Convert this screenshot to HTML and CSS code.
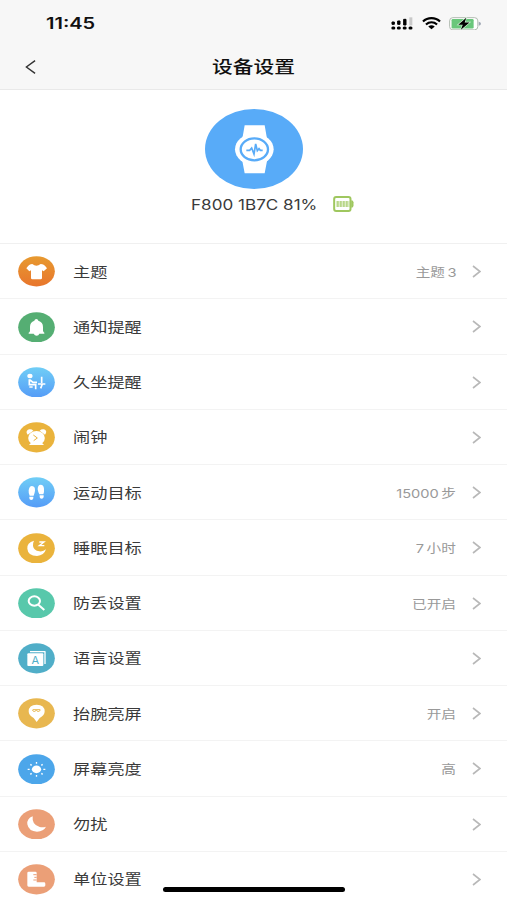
FILE: index.html
```html
<!DOCTYPE html>
<html lang="zh-CN">

<head>
    <meta charset="UTF-8">
    <meta name="viewport" content="width=device-width, initial-scale=1.0">
    <title>设备设置</title>
    <link rel="stylesheet" href="styles.css">
</head>

<body>
    <header class="header">
        <div class="status-bar">
            <span class="time">11:45</span>
            <div class="status-icons">
                <svg class="signal" viewBox="0 0 66 39">
                    <path fill="#c9c9c9" d="M55 1h9v24h-9z" />
                    <path d="M3 15h7v7H3zM20 12h7v10h-7zM38 7h7v17h-7z" stroke="#000" stroke-width="3" stroke-linejoin="round" />
                    <path d="M5.500 33h3M22 33h3M39.500 33h3M57 33h3" stroke="#000" stroke-width="9" stroke-linecap="round" />
                </svg>
                <svg class="wifi" viewBox="0 0 58 38">
                    <g fill="none" stroke="#000" stroke-width="6.500">
                        <path d="M3 14C17 0 41 0 55 14" />
                        <path d="M12 23C22 14 36 14 46 23" />
                    </g>
                    <path d="M19 29Q29 21 39 29L29 37z" />
                </svg>
                <svg class="charge" viewBox="0 0 100 42">
                    <rect x="2" y="2" width="88" height="38" rx="10" fill="#fff" stroke="#aeb8ad" stroke-width="3" />
                    <rect x="8" y="6" width="69" height="30" rx="4" fill="#69c77b" />
                    <path fill="#a0a8b5" d="M93 15q7 1 7 6t-7 6z" />
                    <path d="M54 2L29 24h14L37 40l27-23H49z" stroke="#d5f3d8" stroke-width="4" paint-order="stroke" />
                </svg>
            </div>
        </div>
        <div class="nav-bar">
            <svg class="back" viewBox="0 0 12 16">
                <path d="M11 1L1.500 8L11 15" />
            </svg>
            <h1 class="title">设备设置</h1>
        </div>
    </header>

    <section class="device">
        <svg class="watch" viewBox="0 0 294 240">
            <ellipse cx="147" cy="120" rx="147" ry="120" fill="#58abf8" />
            <g fill="#fff">
                <path d="M119 49h60l7 40h-74zM111 151h76l-8 42h-60z" />
                <ellipse cx="148" cy="121" rx="58" ry="47" />
            </g>
            <ellipse cx="148" cy="121" rx="41" ry="33" fill="none" stroke="#58abf8" stroke-width="7" />
            <path d="M124 124h10l6-7 7 18 5-30 5 20 5-6 4 5h7" fill="none" stroke="#58abf8" stroke-width="5" />
        </svg>
        <div class="device-info">
            <span class="device-name"><span class="wide">F800 1B7C 81%</span></span>
            <svg class="battery" viewBox="0 0 62 48">
                <rect x="3" y="3" width="49" height="42" rx="6" fill="none" stroke="#9fc75f" stroke-width="6" />
                <path fill="#9fc75f" d="M54 13q7 0 7 6v10q0 6-7 6z" />
                <path d="M10 24h39" stroke="#b8d789" stroke-width="18" stroke-dasharray="7 2" />
            </svg>
        </div>
    </section>

    <ul class="menu">
        <li class="row">
            <svg class="icon" viewBox="0 0 111 92">
                <defs>
                    <linearGradient id="orange" x2="0" y2="1">
                        <stop stop-color="#e79a30" />
                        <stop offset="1" stop-color="#e8752c" />
                    </linearGradient>
                    <linearGradient id="blue" x2="0" y2="1">
                        <stop stop-color="#70cef6" />
                        <stop offset="1" stop-color="#559cf7" />
                    </linearGradient>
                </defs>
                <ellipse cx="55.500" cy="46" rx="55" ry="45.500" fill="url(#orange)" />
                <path class="shape" d="M43 24q12 10 25 0 11 0 19 13l-10 9-5-3v23q0 4-4 4H43q-4 0-4-4V43l-5 3-9-9q8-13 18-13z" />
            </svg>
            <span class="label">主题</span>
            <span class="value">主题 3</span>
            <svg class="arrow" viewBox="0 0 9 13"><path d="M1 1l7 5.500-7 5.500" /></svg>
        </li>
        <li class="row">
            <svg class="icon" viewBox="0 0 111 92">
                <ellipse cx="55.500" cy="46" rx="55" ry="45.500" fill="#55ae73" />
                <path class="shape" d="M55 21q5 0 6 5 14 4 14 19v11q1 5 4 6v3H32v-3q4-1 4-6V45q0-15 13-19 1-5 6-5zM47 65h17q-2 6-8 6t-9-6z" />
            </svg>
            <span class="label">通知提醒</span>
            <svg class="arrow" viewBox="0 0 9 13"><path d="M1 1l7 5.500-7 5.500" /></svg>
        </li>
        <li class="row">
            <svg class="icon" viewBox="0 0 111 92">
                <ellipse cx="55.500" cy="46" rx="55" ry="45.500" fill="url(#blue)" />
                <ellipse class="shape" cx="36" cy="27" rx="8" ry="6.500" />
                <path class="line desk" d="M34 37v16h19v14M36 39l9 7h12M34 60h10M60 51h22M73 51l-5 13M71 48V29" />
            </svg>
            <span class="label">久坐提醒</span>
            <svg class="arrow" viewBox="0 0 9 13"><path d="M1 1l7 5.500-7 5.500" /></svg>
        </li>
        <li class="row">
            <svg class="icon" viewBox="0 0 111 92">
                <ellipse cx="55.500" cy="46" rx="55" ry="45.500" fill="#eab33c" />
                <path class="shape" d="M26 33q-2-8 8-11 7-1 12 4L29 38zM84 33q3-8-7-11-7-1-12 4l16 12z" />
                <ellipse class="shape" cx="55.500" cy="48" rx="25" ry="21" />
                <path class="shape" d="M33 69l9-10h27l9 10z" />
                <path d="M46 39l12 9-11 8" fill="none" stroke="#eab33c" stroke-width="3" />
            </svg>
            <span class="label">闹钟</span>
            <svg class="arrow" viewBox="0 0 9 13"><path d="M1 1l7 5.500-7 5.500" /></svg>
        </li>
        <li class="row">
            <svg class="icon" viewBox="0 0 111 92">
                <ellipse cx="55.500" cy="46" rx="55" ry="45.500" fill="url(#blue)" />
                <path class="shape" d="M42 27q10 1 9 14-1 8-4 15H35q-4-8-3-16 2-13 10-13zM34 59h12v5q-1 5-6 5-6 0-6-5zM68 23q9 0 10 12 1 8-2 17H64q-4-8-5-15 0-14 9-14zM65 55h12v5q-1 5-6 5-6 0-6-5z" />
            </svg>
            <span class="label">运动目标</span>
            <span class="value">15000 步</span>
            <svg class="arrow" viewBox="0 0 9 13"><path d="M1 1l7 5.500-7 5.500" /></svg>
        </li>
        <li class="row">
            <svg class="icon" viewBox="0 0 111 92">
                <ellipse cx="55.500" cy="46" rx="55" ry="45.500" fill="#eab33c" />
                <path class="shape" d="M48 23Q26 29 28 47q2 22 29 22 21-1 27-20-9 8-20 6-17-3-19-16-1-9 3-16z" />
                <path class="line thin" d="M64 27h14L64 38h15" />
            </svg>
            <span class="label">睡眠目标</span>
            <span class="value">7 小时</span>
            <svg class="arrow" viewBox="0 0 9 13"><path d="M1 1l7 5.500-7 5.500" /></svg>
        </li>
        <li class="row">
            <svg class="icon" viewBox="0 0 111 92">
                <ellipse cx="55.500" cy="46" rx="55" ry="45.500" fill="#58c8ab" />
                <ellipse class="line" cx="49" cy="39" rx="17" ry="14" />
                <path class="line" d="M61 50l18 16" />
            </svg>
            <span class="label">防丢设置</span>
            <span class="value">已开启</span>
            <svg class="arrow" viewBox="0 0 9 13"><path d="M1 1l7 5.500-7 5.500" /></svg>
        </li>
        <li class="row">
            <svg class="icon" viewBox="0 0 111 92">
                <ellipse cx="55.500" cy="46" rx="55" ry="45.500" fill="#50aec8" />
                <path d="M36 26h45v37" fill="none" stroke="#fff" stroke-width="4" stroke-linejoin="round" />
                <rect class="shape" x="28" y="31" width="48" height="38" rx="3" />
                <text class="letter" x="52" y="62" text-anchor="middle">A</text>
            </svg>
            <span class="label">语言设置</span>
            <svg class="arrow" viewBox="0 0 9 13"><path d="M1 1l7 5.500-7 5.500" /></svg>
        </li>
        <li class="row">
            <svg class="icon" viewBox="0 0 111 92">
                <ellipse cx="55.500" cy="46" rx="55" ry="45.500" fill="#e8b750" />
                <path class="shape" d="M56 20q24 1 24 20 0 12-15 20l-9 12-9-12Q32 52 32 40q0-19 24-20z" />
                <path d="M43 36l6 6 6-6 6 6 6-6M44 35h23" fill="none" stroke="#e8b750" stroke-width="3" />
            </svg>
            <span class="label">抬腕亮屏</span>
            <span class="value">开启</span>
            <svg class="arrow" viewBox="0 0 9 13"><path d="M1 1l7 5.500-7 5.500" /></svg>
        </li>
        <li class="row">
            <svg class="icon" viewBox="0 0 111 92">
                <ellipse cx="55.500" cy="46" rx="55" ry="45.500" fill="#4ca6ea" />
                <ellipse class="shape" cx="55.500" cy="46" rx="14" ry="11.500" />
                <path class="line thin" d="M55.500 24v5M55.500 63v5M29 46h6M76 46h6M37 31l4 3M70 58l4 3M74 31l-4 3M41 58l-4 3" />
            </svg>
            <span class="label">屏幕亮度</span>
            <span class="value">高</span>
            <svg class="arrow" viewBox="0 0 9 13"><path d="M1 1l7 5.500-7 5.500" /></svg>
        </li>
        <li class="row">
            <svg class="icon" viewBox="0 0 111 92">
                <ellipse cx="55.500" cy="46" rx="55" ry="45.500" fill="#eb9f77" />
                <path class="shape" d="M44 22Q26 29 28 46q4 21 29 22 20-1 27-15-9 3-19 1-24-6-21-32z" />
            </svg>
            <span class="label">勿扰</span>
            <svg class="arrow" viewBox="0 0 9 13"><path d="M1 1l7 5.500-7 5.500" /></svg>
        </li>
        <li class="row">
            <svg class="icon" viewBox="0 0 111 92">
                <ellipse cx="55.500" cy="46" rx="55" ry="45.500" fill="#eb9f77" />
                <path class="shape" d="M32 23h20q4 0 4 4v28h22q4 0 4 4v5q0 4-4 4H32q-4 0-4-4V27q0-4 4-4z" />
                <path d="M46 32h10M49 40h7M46 48h10" stroke="#eb9f77" stroke-width="3" />
            </svg>
            <span class="label">单位设置</span>
            <svg class="arrow" viewBox="0 0 9 13"><path d="M1 1l7 5.500-7 5.500" /></svg>
        </li>
    </ul>

    <div class="home-indicator"></div>
</body>

</html>
```
FILE: styles.css
```css
* {
    box-sizing: border-box;
}

body {
    margin: 0;
    height: 900px;
    overflow: hidden;
    position: relative;
    background: #fff;
    color: #3a3a3a;
    font-family: Inter, "Noto Sans CJK SC", sans-serif;
}

svg {
    display: block;
    flex-shrink: 0;
}

.header {
    height: 90px;
    background: #f7f7f7;
    border-bottom: 1px solid #e9e9e9;
}

.status-bar {
    height: 46px;
    padding: 1px 26px 0 46px;
    display: flex;
    align-items: center;
    justify-content: space-between;
}

.time {
    font-size: 15.5px;
    font-weight: 600;
    color: #111;
    transform: scaleX(1.29);
    transform-origin: left;
}

.status-icons {
    display: flex;
    align-items: center;
    gap: 8.5px;
}

.signal {
    width: 22px;
    height: 13px;
}

.wifi {
    width: 19px;
    height: 12.5px;
}

.charge {
    width: 32px;
    height: 13.5px;
}

.nav-bar {
    height: 42px;
    padding: 0 25px;
    display: grid;
    grid-template-columns: 12px 1fr 12px;
    align-items: center;
}

.back {
    width: 11px;
    height: 16px;
}

.back path {
    fill: none;
    stroke: #333;
    stroke-width: 1.5;
}

.title {
    margin: 0;
    font-size: 17px;
    font-weight: 500;
    line-height: 24px;
    text-align: center;
    color: #111;
    transform: scaleX(1.22);
}

/* Watch picture with name and battery */
.device {
    height: 154px;
    padding-top: 19px;
    border-bottom: 1px solid #f0f0f0;
}

.watch {
    width: 98px;
    height: 80px;
    margin: 0 auto;
}

.device-info {
    display: flex;
    align-items: center;
    height: 30px;
    padding-left: 191px;
}

.device-name {
    width: 142px;
    font-size: 14px;
    white-space: nowrap;
}

.wide {
    display: inline-block;
    transform: scaleX(1.22);
    transform-origin: left;
}

.battery {
    width: 21px;
    height: 16px;
}

/* Settings list */
.menu {
    margin: 0;
    padding: 0;
    list-style: none;
}

.row {
    height: 55.25px;
    padding: 1px 26px 0 17.5px;
    display: flex;
    align-items: center;
    border-bottom: 1px solid #f3f3f3;
}

.icon {
    width: 37px;
    height: 30.7px;
    margin-right: 18.5px;
}

.shape {
    fill: #fff;
}

.line {
    fill: none;
    stroke: #fff;
    stroke-width: 6;
}

.thin {
    stroke-width: 4;
}

.desk {
    stroke-width: 5;
}

.letter {
    fill: #50aec8;
    font-size: 33px;
    font-weight: 400;
}

.label {
    padding-bottom: 2px;
    font-size: 14.1px;
    transform: scaleX(1.22);
    transform-origin: left;
}

.value {
    margin-left: auto;
    font-size: 12px;
    word-spacing: -1.3px;
    color: #999;
    transform: scaleX(1.22);
    transform-origin: right;
}

.arrow {
    width: 9px;
    height: 13px;
    margin-left: auto;
}

.value + .arrow {
    margin-left: 16px;
}

.arrow path {
    fill: none;
    stroke: #b8b8b8;
    stroke-width: 1.6;
}

.home-indicator {
    position: absolute;
    left: 163px;
    bottom: 8px;
    width: 182px;
    height: 5px;
    border-radius: 3px;
    background: #000;
}
```
